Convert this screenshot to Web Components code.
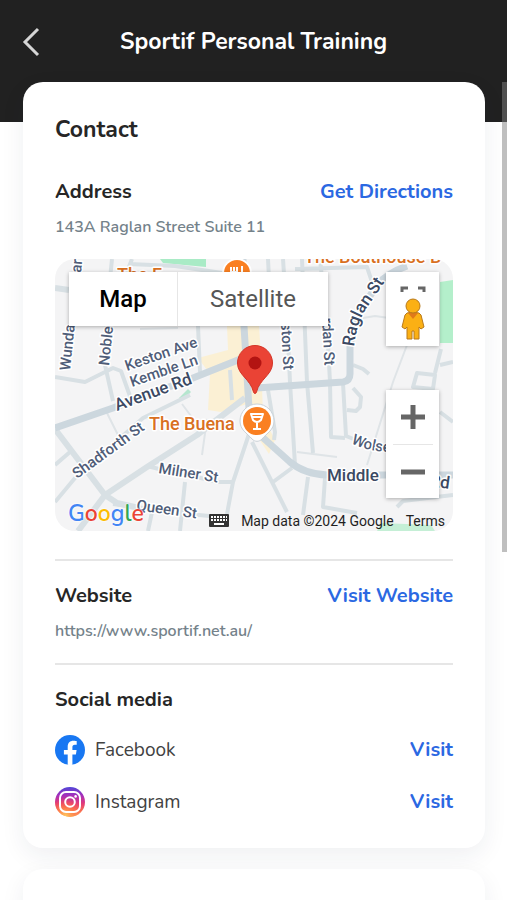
<!DOCTYPE html>
<html lang="en">
<head>
<meta charset="utf-8">
<meta name="viewport" content="width=device-width, initial-scale=1">
<title>Sportif Personal Training</title>
<style>
body {
   margin: 0;
   background: #fff;
   color: #262626;
   font-family: Nunito, 'Open Sans', sans-serif;
   --link: #2b68e2;
   --muted: #74828a;
   --line: #e6e6e6;
}
</style>
</head>
<body>

<app-shell>
   <page-header slot="header" title="Sportif Personal Training"></page-header>

   <info-card title="Contact">
      <info-section title="Address" action="Get Directions">
         <span slot="detail">143A Raglan Street Suite 11</span>
         <street-map></street-map>
      </info-section>
      <info-section title="Website" action="Visit Website">
         <span slot="detail">https://www.sportif.net.au/</span>
      </info-section>
      <info-section title="Social media">
         <social-link name="Facebook">
            <svg viewBox="0 0 30 30" width="30" height="30" aria-hidden="true">
               <circle cx="15" cy="15" r="15" fill="#1877f2"/>
               <path fill="#fff" d="M12.7 29.8V19.4H8.900V15h3.800v-3.300c0-3.800 2.300-5.900 5.700-5.900 1.600 0 3.300.3 3.300.3v3.700h-1.900c-1.800 0-2.400 1.100-2.400 2.300V15h4.200l-.7 4.400h-3.500v10.400a15 15 0 0 1-4.700 0z"/>
            </svg>
         </social-link>
         <social-link name="Instagram">
            <svg viewBox="0 0 30 30" width="30" height="30" aria-hidden="true">
               <defs>
                  <linearGradient id="insta-base" x1="0" y1="0" x2="0" y2="1">
                     <stop offset="0" stop-color="#4f46d8"/>
                     <stop offset=".28" stop-color="#a52fbb"/>
                     <stop offset=".55" stop-color="#e23a78"/>
                     <stop offset=".8" stop-color="#f9704f"/>
                     <stop offset="1" stop-color="#fdd27a"/>
                  </linearGradient>
                  <radialGradient id="insta-glow" cx=".35" cy=".95" r=".6">
                     <stop offset="0" stop-color="#ffc45c"/>
                     <stop offset=".5" stop-color="#ff7a45" stop-opacity=".7"/>
                     <stop offset="1" stop-color="#f9504f" stop-opacity="0"/>
                  </radialGradient>
               </defs>
               <circle cx="15" cy="15" r="15" fill="url(#insta-base)"/>
               <circle cx="15" cy="15" r="15" fill="url(#insta-glow)"/>
               <g fill="none" stroke="#fff" stroke-width="2">
                  <rect x="5" y="5" width="20" height="20" rx="6"/>
                  <circle cx="15" cy="15" r="4.8"/>
               </g>
               <circle cx="20.6" cy="9.4" r="1.3" fill="#fff"/>
            </svg>
         </social-link>
      </info-section>
   </info-card>

   <info-card></info-card>
</app-shell>

<script>
class AppShell extends HTMLElement {
   constructor() {
      super()
      this.attachShadow({ mode: 'open' })
      this.shadowRoot.innerHTML = `
      <style>
      :host {
         display: block;
         position: relative;
         height: 100vh;
         overflow: hidden;
      }

      main {
         display: grid;
         gap: 21px;
         margin-top: -40px;
         padding: 0 22px 22px 23px;
      }

      .thumb {
         position: absolute;
         top: 82px;
         right: 0;
         width: 5px;
         height: 470px;
         background: rgb(128 128 128 / 0.5);
      }
      </style>

      <slot name="header"></slot>
      <main><slot></slot></main>
      <div class="thumb"></div>
      `
   }
}

class PageHeader extends HTMLElement {
   constructor() {
      super()
      this.attachShadow({ mode: 'open' })
      this.shadowRoot.innerHTML = `
      <style>
      :host {
         display: block;
         background: #212121;
         color: #fff;
         padding-bottom: 38px;
      }

      header {
         display: grid;
         grid-template-columns: 62px 1fr 62px;
         align-items: center;
         height: 84px;
      }

      button {
         display: grid;
         place-content: center;
         width: 62px;
         height: 62px;
         padding: 0;
         border: 0;
         background: none;
         color: #d6d6d6;
         cursor: pointer;
      }

      h1 {
         margin: 0;
         font-size: 23px;
         line-height: 30px;
         font-weight: 700;
         text-align: center;
         white-space: nowrap;
      }
      </style>

      <header>
         <button type="button" aria-label="Back">
            <svg viewBox="0 0 18 30" width="18" height="30" fill="none" stroke="currentColor" stroke-width="3">
               <path d="M16 2 3 15l13 13"/>
            </svg>
         </button>
         <h1></h1>
      </header>
      `
   }

   connectedCallback() {
      this.shadowRoot.querySelector('h1').textContent = this.getAttribute('title')
   }
}

class InfoCard extends HTMLElement {
   constructor() {
      super()
      this.attachShadow({ mode: 'open' })
      this.shadowRoot.innerHTML = `
      <style>
      :host {
         display: block;
         padding: 33px 32px 31px;
         border-radius: 20px;
         background: #fff;
         box-shadow: 0 8px 24px rgb(30 40 70 / 0.07);
      }

      h2 {
         margin: 0 0 32px;
         font-size: 23px;
         line-height: 30px;
         font-weight: 700;
      }

      h2:empty {
         margin: 0;
      }
      </style>

      <h2></h2>
      <slot></slot>
      `
   }

   connectedCallback() {
      this.shadowRoot.querySelector('h2').textContent = this.getAttribute('title') ?? ''
   }
}

class InfoSection extends HTMLElement {
   constructor() {
      super()
      this.attachShadow({ mode: 'open' })
      this.shadowRoot.innerHTML = `
      <style>
      :host {
         display: block;
      }

      :host(:not(:first-child)) {
         border-top: 2px solid var(--line);
         padding-top: 20px;
      }

      :host(:not(:last-child)) {
         padding-bottom: 20px;
      }

      .head {
         display: flex;
         justify-content: space-between;
         font-size: 20px;
         line-height: 30px;
         font-weight: 700;
      }

      h3 {
         margin: 0;
         font: inherit;
      }

      a {
         color: var(--link);
         text-decoration: none;
      }

      .detail {
         display: block;
         margin-top: 8px;
         color: var(--muted);
         font-size: 16px;
         line-height: 24px;
         font-weight: 600;
      }
      </style>

      <div class="head"><h3></h3></div>
      <slot name="detail" class="detail"></slot>
      <slot></slot>
      `
   }

   connectedCallback() {
      const root = this.shadowRoot
      root.querySelector('h3').textContent = this.getAttribute('title')

      if (!this.hasAttribute('action')) {
         root.querySelector('.detail').remove()
         return
      }

      const link = document.createElement('a')
      link.href = '#'
      link.textContent = this.getAttribute('action')
      root.querySelector('.head').append(link)
   }
}

class SocialLink extends HTMLElement {
   constructor() {
      super()
      this.attachShadow({ mode: 'open' })
      this.shadowRoot.innerHTML = `
      <style>
      :host {
         display: flex;
         align-items: center;
         gap: 10px;
         height: 30px;
         margin-top: 20px;
      }

      :host(:last-child) {
         margin-top: 22px;
      }

      ::slotted(svg) {
         display: block;
      }

      .name {
         flex: 1;
         color: #424242;
         font-size: 19px;
         line-height: 30px;
      }

      a {
         color: var(--link);
         font-size: 20px;
         line-height: 30px;
         font-weight: 700;
         text-decoration: none;
      }
      </style>

      <slot></slot>
      <span class="name"></span>
      <a href="#">Visit</a>
      `
   }

   connectedCallback() {
      const name = this.getAttribute('name')
      this.shadowRoot.querySelector('.name').textContent = name
      this.shadowRoot.querySelector('a').title = `Visit ${name}`
   }
}

class StreetMap extends HTMLElement {
   constructor() {
      super()
      this.attachShadow({ mode: 'open' })
      this.shadowRoot.innerHTML = `
      <style>
      :host {
         display: block;
         position: relative;
         height: 272px;
         margin: 20px 0 8px;
         border-radius: 20px;
         overflow: hidden;
         background: #f4f4f5;
         font-family: Roboto, sans-serif;
      }

      .tiles {
         display: block;
         width: 100%;
         height: 100%;
      }

      .roads {
         fill: none;
         stroke: #d8e0e4;
         stroke-width: 4;
         stroke-linejoin: round;
      }

      .roads .main {
         stroke: #ccd7de;
         stroke-width: 7;
      }

      .roads .lane {
         stroke: #dfe4e7;
         stroke-width: 2;
      }

      .labels {
         fill: #4f5d78;
         stroke: #fff;
         stroke-width: 3;
         stroke-linejoin: round;
         paint-order: stroke;
         font-size: 15px;
         font-weight: 500;
      }

      .labels .big {
         fill: #3b4963;
         font-size: 17px;
      }

      .labels .place {
         fill: #d9701f;
         font-size: 18px;
      }

      button {
         border: 0;
         padding: 0;
         background: #fff;
         cursor: pointer;
         font-family: inherit;
      }

      .types,
      .pegman,
      .zoom {
         position: absolute;
         background: #fff;
         box-shadow: 0 1px 4px rgb(0 0 0 / 0.3);
      }

      .types {
         top: 13px;
         left: 14px;
         display: grid;
         grid-template-columns: 109px 150px;
         height: 54px;
      }

      .types button {
         color: #565656;
         font-size: 24px;
      }

      .types button[aria-pressed=true] {
         color: #000;
         font-weight: 500;
         border-right: 1px solid #e6e6e6;
      }

      .pegman {
         top: 13px;
         right: 14px;
         width: 53px;
         height: 74px;
         display: grid;
         place-content: center;
      }

      .zoom {
         right: 14px;
         bottom: 33px;
         width: 53px;
         display: grid;
         justify-items: center;
      }

      .zoom button {
         display: grid;
         place-content: center;
         width: 40px;
         height: 54px;
      }

      .zoom button + button {
         border-top: 1px solid #e6e6e6;
      }

      .logo {
         position: absolute;
         left: 13px;
         bottom: 2px;
         font-family: Nunito, Lato, sans-serif;
         font-size: 23px;
         line-height: 30px;
         font-weight: 600;
         text-shadow: 0 0 2px #fff, 0 0 2px #fff;
      }

      .blue { color: #4285f4; }
      .red { color: #ea4335; }
      .yellow { color: #fbbc05; }
      .green { color: #34a853; }

      .legal {
         position: absolute;
         right: 8px;
         bottom: 0;
         display: flex;
         align-items: center;
         gap: 12px;
         color: #1f1f1f;
         font-size: 14px;
         line-height: 20px;
      }

      .legal a {
         color: inherit;
         text-decoration: none;
      }

      .legal button {
         background: none;
      }

      svg {
         display: block;
      }
      </style>

      <svg class="tiles" viewBox="0 0 398 272" preserveAspectRatio="xMidYMid slice" role="img" aria-label="Street map around Raglan Street">
         <path fill="#a9ebc6" d="M105 0h46v8l-43-4z"/>
         <path fill="#b4efcb" d="M385 23l13-2v63h-13z"/>
         <path fill="#c5efd6" d="M322 272l4-8 50 2 4 6z"/>
         <path fill="#b5e6cf" d="M124 139l9-9 3 3-7 7z"/>
         <path fill="#fbf0d4" d="M172 67h32l2 30 2 60 12 24-6 14-20-30-2-20-26 8-13-2 2-36-12-16 30-8z"/>

         <g class="roads">
            <path class="lane" d="M85 70l38-1M52 154l11 22M127 145l9 12M152 160l-5 36M308 59l12-2 14 2M242 193l40 5M352 86l-14 37-26 83"/>
            <path d="M0 118l30 5 28-14 8 3 10 28M57 0l-5 50-2 56 8 36M77 0l-5 13M74 5l46 2 54 8M143 67l2 46M0 206l15-13M0 243l20-24 68-60 47-23M92 207l12 3 60 13h14M130 223l-5 49M97 253l-4 19M197 166l-19 57-6 32M175 111l2 30M213 0l1 20M58 245l76 10 30 3"/>
            <path d="M228 0l4 60 3 63 5 83M247 0l5 123 6 71M265 0l7 67 3 56 1 55 14 1M288 124l3 53 20 8M298 129l8 9-1 10-4 4-9-1M298 106l10 4 6 5M197 183l35 70M218 223l19-14M253 218l-5 38M270 219l-2 29 34 6M213 131l7 42-1 8M240 10l72-2 5 15M358 128l4-14 18 2-2 14zM386 90l-6 24M385 106l13-3M385 153l13 10M342 248l6-6 50-6"/>
            <path stroke-width="6" d="M0 29l14 2M0 170l50 66 12 8 22 5M50 236l-27 36M50 236l42-28 50-32 48-37"/>
            <path class="main" d="M0 169l58-20 80-30 50-20M188 0l1 67 6 99M202 129l86-6q7-1 7-8V86l5-26 22-34q10-12 30-19M205 176l30 27q14 12 37 13h126"/>
         </g>

         <g class="labels">
            <text transform="translate(15 112) rotate(-84)">Wunda</text>
            <text transform="translate(26 14) rotate(-84)">ar</text>
            <text transform="translate(54 107) rotate(-84)">Noble</text>
            <text transform="translate(72 112) rotate(-19)">Keston Ave</text>
            <text transform="translate(77 128) rotate(-19)">Kemble Ln</text>
            <text class="big" transform="translate(62 152) rotate(-20)">Avenue Rd</text>
            <text transform="translate(22 220) rotate(-36)">Shadforth St</text>
            <text transform="translate(103 214) rotate(9)">Milner St</text>
            <text transform="translate(81 251) rotate(8)">Queen St</text>
            <text transform="translate(226 64) rotate(87)">ston St</text>
            <text transform="translate(267 59) rotate(87)">rdan St</text>
            <path id="raglan" fill="none" stroke="none" d="M299 88q2-22 12-38l22-32"/>
            <text class="big"><textPath href="#raglan">Raglan St</textPath></text>
            <path id="wolseley" fill="none" stroke="none" d="M296 184q18 10 48 9"/>
            <text><textPath href="#wolseley">Wolse</textPath></text>
            <text class="big" x="272" y="222">Middle</text>
            <text class="big" transform="translate(374 227) rotate(8)">Rd</text>
            <text class="place" x="94" y="171">The Buena</text>
            <text class="place" x="62" y="22">The F</text>
            <text class="place" x="249" y="4">The Boathouse B</text>
         </g>

         <circle cx="182" cy="14" r="14" fill="#fa8022" stroke="#fff" stroke-width="2"/>
         <path fill="none" stroke="#fff" stroke-width="2" d="M176 8v6M179 8v6M182 8v6M175 13h8M187 7v8"/>

         <path fill="#fff" stroke="#c9d0d6" d="M202 145a17 17 0 0 1 17 17c0 9-7 12-12 18-3 3-7 3-10 0-5-6-12-9-12-18a17 17 0 0 1 17-17z"/>
         <circle cx="202" cy="162" r="14" fill="#fa8022"/>
         <path fill="none" stroke="#fff" stroke-width="2" stroke-linejoin="round" d="M196 155h12l-2 6q-4 4-8 0zM202 163v7M198 170h8M197 158h10"/>

         <path fill="#ea4335" stroke="#d33426" d="M200 86.500a17.500 17.500 0 0 1 17.500 17.500c0 12-13 16-16 29-.5 2-2.500 2-3 0-3-13-16-17-16-29A17.500 17.500 0 0 1 200 86.500z"/>
         <circle cx="200" cy="104" r="6.500" fill="#b31412"/>
      </svg>

      <div class="types">
         <button type="button" aria-pressed="true">Map</button>
         <button type="button" aria-pressed="false">Satellite</button>
      </div>

      <button class="pegman" type="button" aria-label="Street View">
         <svg viewBox="0 -8 26 62" width="26" height="62">
            <path fill="none" stroke="#666" stroke-width="3" d="M2 6V2h6M18 2h6v4"/>
            <path fill="#fbb014" stroke="#b8791a" d="M7 27q6-2 12 0l2 2 3 12-3 2-2-2v12h-5v-8h-2v8H7V41l-2 2-3-2 3-12z"/>
            <path fill="#e07a1a" d="M8 27h10l-5 6z"/>
            <circle cx="13" cy="20" r="7" fill="#fbb014" stroke="#b8791a"/>
         </svg>
      </button>

      <div class="zoom">
         <button type="button" aria-label="Zoom in">
            <svg viewBox="0 0 24 24" width="24" height="24" stroke="#666" stroke-width="5"><path d="M0 12h24M12 0v24"/></svg>
         </button>
         <button type="button" aria-label="Zoom out">
            <svg viewBox="0 0 24 24" width="24" height="24" stroke="#666" stroke-width="5"><path d="M0 12h24"/></svg>
         </button>
      </div>

      <div class="logo"><span class="blue">G</span><span class="red">o</span><span class="yellow">o</span><span class="blue">g</span><span class="green">l</span><span class="red">e</span></div>

      <div class="legal">
         <button type="button" aria-label="Keyboard shortcuts">
            <svg viewBox="0 0 20 14" width="20" height="14">
               <rect x="0" y="0" width="20" height="13" rx="1" fill="#333"/>
               <path stroke="#fff" stroke-width="2" stroke-dasharray="2 1" d="M2 3h16M2 6h16"/>
               <path stroke="#fff" stroke-width="2" d="M5 10h10"/>
            </svg>
         </button>
         <span>Map data ©2024 Google</span>
         <a href="#">Terms</a>
      </div>
      `
   }
}

// Register the elements
window.customElements.define('app-shell', AppShell)
window.customElements.define('page-header', PageHeader)
window.customElements.define('info-card', InfoCard)
window.customElements.define('info-section', InfoSection)
window.customElements.define('social-link', SocialLink)
window.customElements.define('street-map', StreetMap)
</script>
</body>
</html>
